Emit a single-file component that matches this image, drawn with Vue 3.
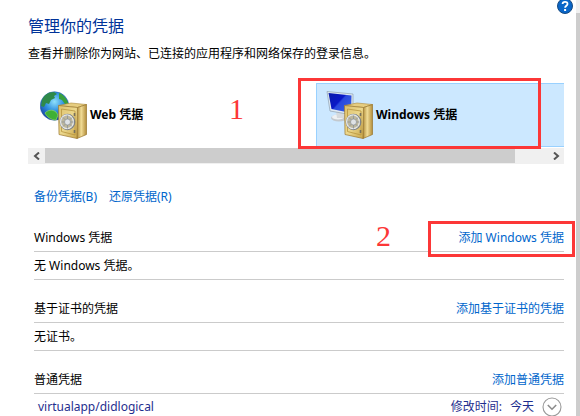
<script setup>
    import {ref} from 'vue'

    const selected = ref('windows')

    const vaults = [
        { id: 'web', name: 'Web 凭据' },
        { id: 'windows', name: 'Windows 凭据' }
    ]

    const sections = ref([
        { title: 'Windows 凭据', add: '添加 Windows 凭据', empty: '无 Windows 凭据。', marked: true, items: [] },
        { title: '基于证书的凭据', add: '添加基于证书的凭据', empty: '无证书。', items: [] },
        { title: '普通凭据', add: '添加普通凭据', items: [{ name: 'virtualapp/didlogical', modified: '今天' }] }
    ])

    const selectVault = (id) => {
        selected.value = id
    }
</script>
<template>
    <div class="window">
        <main class="content">
            <button class="help" aria-label="帮助">
                <svg width="16" height="16" viewBox="0 0 16 16">
                    <circle cx="8" cy="8" r="7.5" fill="#0a66c8" stroke="#174a80" />
                    <path d="M5.6 6.1C5.6 3.1 10.5 3.1 10.5 5.9C10.5 7.7 8.1 7.7 8.1 9.8" fill="none" stroke="#fff" stroke-width="1.8" />
                    <rect x="7.1" y="11" width="2" height="2" fill="#fff" />
                </svg>
            </button>
            <h1>管理你的凭据</h1>
            <p class="intro">查看并删除你为网站、已连接的应用程序和网络保存的登录信息。</p>

            <div class="vaults">
                <div v-for="vault in vaults" :key="vault.id" class="vault-cell">
                    <button class="vault" :class="{ selected: selected === vault.id }" @click="selectVault(vault.id)">
                        <svg class="vault-icon" width="48" height="48" viewBox="0 0 48 48" aria-hidden="true">
                            <defs>
                                <radialGradient :id="vault.id + '-sea'" cx="0.5" cy="0.35" r="0.65">
                                    <stop offset="0" stop-color="#8fe0fb" />
                                    <stop offset="0.5" stop-color="#2f8fe0" />
                                    <stop offset="1" stop-color="#15409c" />
                                </radialGradient>
                                <linearGradient :id="vault.id + '-screen'" x1="0" y1="0" x2="1" y2="0.8">
                                    <stop offset="0" stop-color="#0a1ca8" />
                                    <stop offset="0.48" stop-color="#0a18c8" />
                                    <stop offset="0.54" stop-color="#2a48dd" />
                                    <stop offset="1" stop-color="#3560e4" />
                                </linearGradient>
                                <linearGradient :id="vault.id + '-front'" x1="0" y1="0" x2="1" y2="1">
                                    <stop offset="0" stop-color="#dcc06c" />
                                    <stop offset="0.5" stop-color="#ecd88e" />
                                    <stop offset="1" stop-color="#c9a548" />
                                </linearGradient>
                                <linearGradient :id="vault.id + '-side'" x1="0" y1="0" x2="1" y2="0">
                                    <stop offset="0" stop-color="#b08c38" />
                                    <stop offset="0.45" stop-color="#f1dc96" />
                                    <stop offset="1" stop-color="#b38d3a" />
                                </linearGradient>
                            </defs>
                            <g v-if="vault.id === 'web'">
                                <circle cx="14.5" cy="15" r="14.3" :fill="'url(#' + vault.id + '-sea)'" stroke="#2659a0" stroke-width="0.5" />
                                <path d="M2 9C4 4 8 1 14 1L17 3L14 5L15 7L11 9L9 13L6 12L4 16L1 15Z" fill="#2f8a4a" />
                                <path d="M5 22C8 19 12 18 16 21L18 24L16 29C11 29 7 26 5 22Z" fill="#3fb035" stroke="#8fdc5c" stroke-width="0.7" />
                                <path d="M19 2C24 4 27 8 28.5 13L25 13L22 9L19 8Z" fill="#38a03c" />
                            </g>
                            <g v-else>
                                <ellipse cx="13" cy="27" rx="8" ry="3.5" fill="#c3c9ce" />
                                <ellipse cx="12" cy="26" rx="6" ry="2.4" fill="#eef1f3" />
                                <path d="M10 20L18 21V27H11Z" fill="#d5dade" />
                                <path d="M1 0.5L27 3V24L4 20Z" fill="#dfeaf2" stroke="#8fa1b0" stroke-width="0.7" />
                                <path d="M2.5 2L25.5 4.5L25 22L5.5 18Z" :fill="'url(#' + vault.id + '-screen)'" />
                            </g>
                            <path d="M18.5 14.5L31 12L46.5 13.5L37.5 16.5Z" fill="#e6cd80" stroke="#ad8a3c" stroke-width="0.6" />
                            <path d="M37.5 16.5L46.5 13.5V43.5L37 47.5Z" :fill="'url(#' + vault.id + '-side)'" stroke="#98752c" stroke-width="0.7" />
                            <path d="M18.5 14.5L37.5 16.5L37 47.5L19 43.5Z" :fill="'url(#' + vault.id + '-front)'" stroke="#9c7930" stroke-width="0.7" />
                            <path d="M21.5 18L35 20V44L21.5 40.5Z" fill="none" stroke="#b8963f" stroke-width="0.8" />
                            <path d="M34.5 22V25M34.5 39V42" stroke="#77705c" stroke-width="1.6" />
                            <ellipse cx="27.5" cy="31" rx="7.2" ry="7.6" fill="#bdb79c" stroke="#7f8386" stroke-width="1.4" />
                            <ellipse cx="27" cy="30.8" rx="6.4" ry="6.9" fill="none" stroke="#e4e7e9" stroke-width="1.3" />
                            <path d="M27.5 24.5V37.5M21.5 31H33.5M23 26.5L32 35.5M32 26.5L23 35.5" stroke="#92979b" stroke-width="0.9" />
                            <circle cx="27.5" cy="31" r="3" fill="#dfe3e6" stroke="#85898c" stroke-width="0.6" />
                        </svg>
                        <span>{{ vault.name }}</span>
                    </button>
                    <span v-if="vault.id === 'web'" class="step step-one">1</span>
                    <span v-else class="mark mark-vault"></span>
                </div>
            </div>
            <div class="hscroll">
                <button aria-label="向左滚动">
                    <svg width="8" height="8" viewBox="0 0 8 8"><path d="M6 0.5L2 4L6 7.5" /></svg>
                </button>
                <div class="htrack"><div class="hthumb"></div></div>
                <button aria-label="向右滚动">
                    <svg width="8" height="8" viewBox="0 0 8 8"><path d="M2 0.5L6 4L2 7.5" /></svg>
                </button>
            </div>

            <nav class="links">
                <a href="#">备份凭据(B)</a>
                <a href="#">还原凭据(R)</a>
            </nav>

            <section v-for="section in sections" :key="section.title">
                <header class="line">
                    <h2>{{ section.title }}</h2>
                    <div class="action">
                        <a href="#">{{ section.add }}</a>
                        <template v-if="section.marked">
                            <span class="step step-two">2</span>
                            <span class="mark mark-add"></span>
                        </template>
                    </div>
                </header>
                <p v-if="section.items.length === 0" class="line">{{ section.empty }}</p>
                <div v-for="item in section.items" :key="item.name" class="item">
                    <span class="item-name">{{ item.name }}</span>
                    <span>修改时间:</span>
                    <span>{{ item.modified }}</span>
                    <button class="expand" aria-label="展开">
                        <svg width="20" height="20" viewBox="0 0 20 20">
                            <circle cx="10" cy="10" r="9" fill="#fff" stroke="#999" stroke-width="1.1" />
                            <path d="M5.8 8L10 12.2L14.2 8" fill="none" stroke="#8c8c8c" stroke-width="1.6" />
                        </svg>
                    </button>
                </div>
            </section>
        </main>
        <div class="vscroll"><div class="vthumb"></div></div>
    </div>
</template>
<style>
body{
    margin: 0;
    background: #fff;
}
</style>
<style scoped>
.window{
    display: flex;
    height: 100vh;
    overflow: hidden;
    color: #000;
    font-family: "Noto Sans", "Noto Sans CJK SC", sans-serif;
    font-size: 12px;
    line-height: 20px;
}
.content{
    position: relative;
    flex: 1;
    min-width: 0;
    padding: 14px 12px 0 28px;
}
h1, h2, p{
    margin: 0;
    font-size: 12px;
    font-weight: normal;
}
h1{
    color: #003399;
    font-size: 16px;
    line-height: 24px;
}
.intro{
    margin-top: 6px;
}
a{
    color: #0066cc;
    text-decoration: none;
}
button{
    padding: 0;
    border: 0;
    background: none;
    font: inherit;
    color: inherit;
}
svg{
    display: block;
}
.help{
    position: absolute;
    top: -2px;
    right: 3px;
}
.vaults{
    display: grid;
    grid-template-columns: 286px 1fr;
    margin: 19px 0 1px 2px;
}
.vault-cell{
    position: relative;
}
.vault{
    display: flex;
    align-items: center;
    gap: 2px;
    width: 100%;
    height: 64px;
    padding-left: 9px;
    border: 1px solid transparent;
    border-right: 0;
    font-weight: bold;
}
.vault.selected{
    background: #cce8ff;
    border-color: #99d1ff;
}
.hscroll{
    display: flex;
    height: 16px;
    background: #f0f0f0;
}
.hscroll button{
    display: flex;
    align-items: center;
    justify-content: center;
    width: 17px;
}
.hscroll path{
    fill: none;
    stroke: #555;
    stroke-width: 2;
}
.htrack{
    flex: 1;
    padding-right: 32px;
}
.hthumb{
    height: 15px;
    background: #cdcdcd;
}
.links{
    display: flex;
    gap: 12px;
    margin: 19px 0 13px 6px;
    line-height: 28px;
}
section{
    margin: 0 0 15px 6px;
}
.line{
    display: flex;
    justify-content: space-between;
    line-height: 27px;
    border-bottom: 1px solid #cbcbcb;
}
.action{
    position: relative;
}
.item{
    display: flex;
    align-items: center;
    gap: 8px;
    height: 26px;
    padding: 0 2px 0 4px;
    color: #1f2f8f;
}
.item-name{
    flex: 1;
}
.vscroll{
    width: 4px;
    padding-top: 13px;
    box-sizing: border-box;
    background: #f0f0f0;
}
.vthumb{
    height: 100%;
    background: #cdcdcd;
}
.mark{
    position: absolute;
    box-sizing: border-box;
    border: 3px solid #fc3737;
    pointer-events: none;
}
.mark-vault{
    top: -5px;
    bottom: -2px;
    left: -18px;
    right: 23px;
}
.mark-add{
    top: -3px;
    bottom: -6px;
    right: -11px;
    width: 147px;
}
.step{
    position: absolute;
    color: #fc3737;
    font-family: "Liberation Serif", serif;
    font-size: 30px;
    line-height: 30px;
}
.step-one{
    top: 11px;
    left: 199px;
}
.step-two{
    top: -3px;
    right: 173px;
}
</style>
